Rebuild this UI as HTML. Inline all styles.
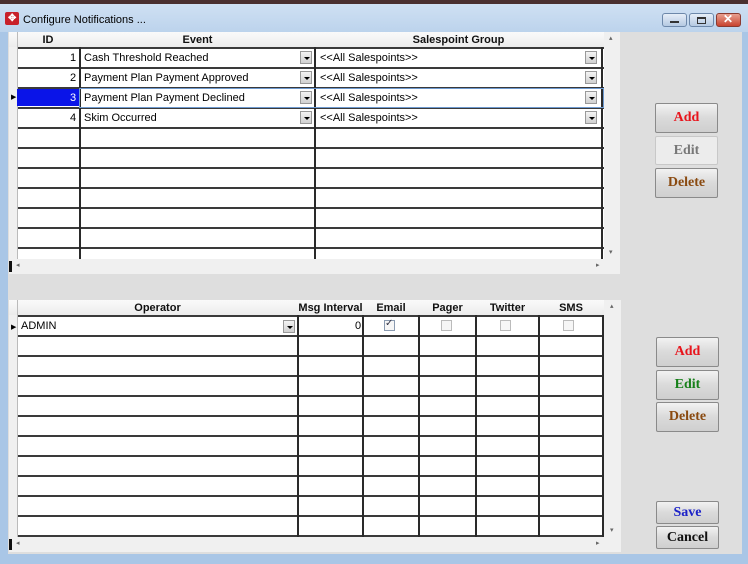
<!DOCTYPE html><html><head><style>
*{margin:0;padding:0;box-sizing:border-box}
body{width:748px;height:564px;position:relative;overflow:hidden;background:#dcdcdc;font-family:"Liberation Sans",Arial,sans-serif;font-size:11px}
.a{position:absolute}
.t{position:absolute;white-space:nowrap}
.h{position:absolute;font-weight:bold;font-size:11px;text-align:center;color:#111}
.vl{position:absolute;width:2px;background:#2a2a2a}
.dd{position:absolute;width:12px;height:13px;background:linear-gradient(#f4f4f4,#d0d0d0);border:1px solid #999}
.dd:after{content:"";position:absolute;left:3px;top:5px;border-left:3px solid transparent;border-right:3px solid transparent;border-top:3px solid #000}
.btn{position:absolute;border:1px solid #8a8a8a;border-radius:2px;background:linear-gradient(#f2f2f2,#dadada 50%,#cfcfcf);font-family:"Liberation Serif",serif;font-weight:bold;font-size:14px;text-align:center}
.cb{position:absolute;width:11px;height:11px;border:1px solid #bbb;background:#f6f6f6}
</style></head><body>
<div class="a" style="left:0;top:0;width:748px;height:564px;background:#a9c6e6"></div>
<div class="a" style="left:0;top:0;width:748px;height:4px;background:#4a3030"></div>
<div class="a" style="left:0;top:4px;width:748px;height:28px;background:linear-gradient(#cfe0f3,#bcd3ec)"></div>
<div class="a" style="left:5px;top:12px;width:14px;height:13px;background:#c8202a;border-radius:2px"></div>
<div class="t" style="left:8px;top:13px;color:#fff;font-size:10px;font-weight:bold">✥</div>
<div class="t" style="left:23px;top:14px;font-size:11px;color:#000">Configure Notifications ...</div>
<div class="a" style="left:662px;top:13px;width:25px;height:14px;border:1px solid #6d88aa;border-radius:3px;background:linear-gradient(#e6eef8,#b5c9e2)"></div>
<div class="a" style="left:670px;top:21px;width:9px;height:2px;background:#333"></div>
<div class="a" style="left:689px;top:13px;width:25px;height:14px;border:1px solid #6d88aa;border-radius:3px;background:linear-gradient(#e6eef8,#b5c9e2)"></div>
<div class="a" style="left:697px;top:17px;width:9px;height:7px;border:1px solid #333;border-top-width:2px"></div>
<div class="a" style="left:716px;top:13px;width:25px;height:14px;border:1px solid #8a3a30;border-radius:3px;background:linear-gradient(#e8a090,#c8432f)"></div>
<div class="t" style="left:723px;top:12px;color:#fff;font-weight:bold;font-size:12px">✕</div>
<div class="a" style="left:8px;top:32px;width:734px;height:522px;background:#dedede"></div>

<div class="a" style="left:9px;top:32px;width:611px;height:242px;background:#f0f0f0"></div>
<div class="a" style="left:9px;top:32px;width:595px;height:15px;background:linear-gradient(#fafafa,#ececec)"></div>
<div class="a" style="left:17px;top:47px;width:587px;height:212px;background:#fff"></div>
<div class="a" style="left:17px;top:47px;width:587px;height:212px;background:repeating-linear-gradient(to bottom,#3a3a3a 0,#3a3a3a 2px,transparent 2px,transparent 20px)"></div>
<div class="vl" style="left:79px;top:47px;height:212px"></div>
<div class="vl" style="left:314px;top:47px;height:212px"></div>
<div class="vl" style="left:601px;top:47px;height:212px"></div>
<div class="a" style="left:17px;top:32px;width:1px;height:227px;background:#bbb"></div>
<div class="h" style="left:17px;top:34px;width:62px">ID</div>
<div class="h" style="left:80px;top:34px;width:235px">Event</div>
<div class="h" style="left:315px;top:34px;width:287px">Salespoint Group</div>
<div class="a" style="left:17px;top:89px;width:62px;height:17px;background:#0a14e8"></div>
<div class="a" style="left:79px;top:88px;width:525px;height:20px;border:1px solid #6e9ad0"></div>
<div class="t" style="left:11px;top:93px;font-size:7px">▶</div>
<div class="t" style="left:70px;top:52px">1</div><div class="t" style="left:84px;top:52px">Cash Threshold Reached</div><div class="t" style="left:320px;top:52px">&lt;&lt;All Salespoints&gt;&gt;</div>
<div class="t" style="left:70px;top:72px">2</div><div class="t" style="left:84px;top:72px">Payment Plan Payment Approved</div><div class="t" style="left:320px;top:72px">&lt;&lt;All Salespoints&gt;&gt;</div>
<div class="t" style="left:70px;top:92px;color:#fff">3</div><div class="t" style="left:84px;top:92px">Payment Plan Payment Declined</div><div class="t" style="left:320px;top:92px">&lt;&lt;All Salespoints&gt;&gt;</div>
<div class="t" style="left:70px;top:112px">4</div><div class="t" style="left:84px;top:112px">Skim Occurred</div><div class="t" style="left:320px;top:112px">&lt;&lt;All Salespoints&gt;&gt;</div>
<div class="dd" style="left:300px;top:51px"></div><div class="dd" style="left:300px;top:71px"></div><div class="dd" style="left:300px;top:91px"></div><div class="dd" style="left:300px;top:111px"></div>
<div class="dd" style="left:585px;top:51px"></div><div class="dd" style="left:585px;top:71px"></div><div class="dd" style="left:585px;top:91px"></div><div class="dd" style="left:585px;top:111px"></div>
<div class="a" style="left:9px;top:261px;width:3px;height:11px;background:#111"></div>
<div class="t" style="left:16px;top:261px;font-size:7px;color:#666">◂</div>
<div class="t" style="left:596px;top:261px;font-size:7px;color:#666">▸</div>
<div class="t" style="left:609px;top:34px;font-size:7px;color:#666">▴</div>
<div class="t" style="left:609px;top:248px;font-size:7px;color:#666">▾</div>

<div class="btn" style="left:655px;top:103px;width:63px;height:30px;line-height:28px;color:#e8141c">Add</div>
<div class="btn" style="left:655px;top:136px;width:63px;height:29px;line-height:27px;color:#777;background:#ececec;border-color:#c8c8c8">Edit</div>
<div class="btn" style="left:655px;top:168px;width:63px;height:30px;line-height:28px;color:#8a4a10">Delete</div>

<div class="a" style="left:9px;top:300px;width:612px;height:252px;background:#f0f0f0"></div>
<div class="a" style="left:9px;top:300px;width:595px;height:15px;background:linear-gradient(#fafafa,#ececec)"></div>
<div class="a" style="left:17px;top:315px;width:587px;height:222px;background:#fff"></div>
<div class="a" style="left:17px;top:315px;width:587px;height:222px;background:repeating-linear-gradient(to bottom,#3a3a3a 0,#3a3a3a 2px,transparent 2px,transparent 20px)"></div>
<div class="a" style="left:17px;top:300px;width:1px;height:237px;background:#bbb"></div>
<div class="vl" style="left:297px;top:315px;height:222px"></div>
<div class="vl" style="left:362px;top:315px;height:222px"></div>
<div class="vl" style="left:418px;top:315px;height:222px"></div>
<div class="vl" style="left:475px;top:315px;height:222px"></div>
<div class="vl" style="left:538px;top:315px;height:222px"></div>
<div class="vl" style="left:602px;top:315px;height:222px"></div>
<div class="h" style="left:17px;top:302px;width:281px">Operator</div>
<div class="h" style="left:298px;top:302px;width:65px">Msg Interval</div>
<div class="h" style="left:363px;top:302px;width:56px">Email</div>
<div class="h" style="left:419px;top:302px;width:57px">Pager</div>
<div class="h" style="left:476px;top:302px;width:63px">Twitter</div>
<div class="h" style="left:539px;top:302px;width:64px">SMS</div>
<div class="t" style="left:11px;top:323px;font-size:7px">▶</div>
<div class="t" style="left:21px;top:320px">ADMIN</div>
<div class="dd" style="left:283px;top:320px"></div>
<div class="t" style="left:355px;top:320px">0</div>
<div class="cb" style="left:384px;top:320px;border-color:#8a9ab0"></div><div class="t" style="left:385px;top:318px;font-size:10px;color:#334">✓</div>
<div class="cb" style="left:441px;top:320px"></div>
<div class="cb" style="left:500px;top:320px"></div>
<div class="cb" style="left:563px;top:320px"></div>
<div class="a" style="left:9px;top:539px;width:3px;height:11px;background:#111"></div>
<div class="t" style="left:16px;top:539px;font-size:7px;color:#666">◂</div>
<div class="t" style="left:596px;top:539px;font-size:7px;color:#666">▸</div>
<div class="t" style="left:610px;top:302px;font-size:7px;color:#666">▴</div>
<div class="t" style="left:610px;top:526px;font-size:7px;color:#666">▾</div>

<div class="btn" style="left:656px;top:337px;width:63px;height:30px;line-height:28px;color:#e8141c">Add</div>
<div class="btn" style="left:656px;top:370px;width:63px;height:30px;line-height:28px;color:#17801a">Edit</div>
<div class="btn" style="left:656px;top:402px;width:63px;height:30px;line-height:28px;color:#8a4a10">Delete</div>
<div class="btn" style="left:656px;top:501px;width:63px;height:23px;line-height:21px;color:#1c22c8">Save</div>
<div class="btn" style="left:656px;top:526px;width:63px;height:23px;line-height:21px;color:#111">Cancel</div>
</body></html>
